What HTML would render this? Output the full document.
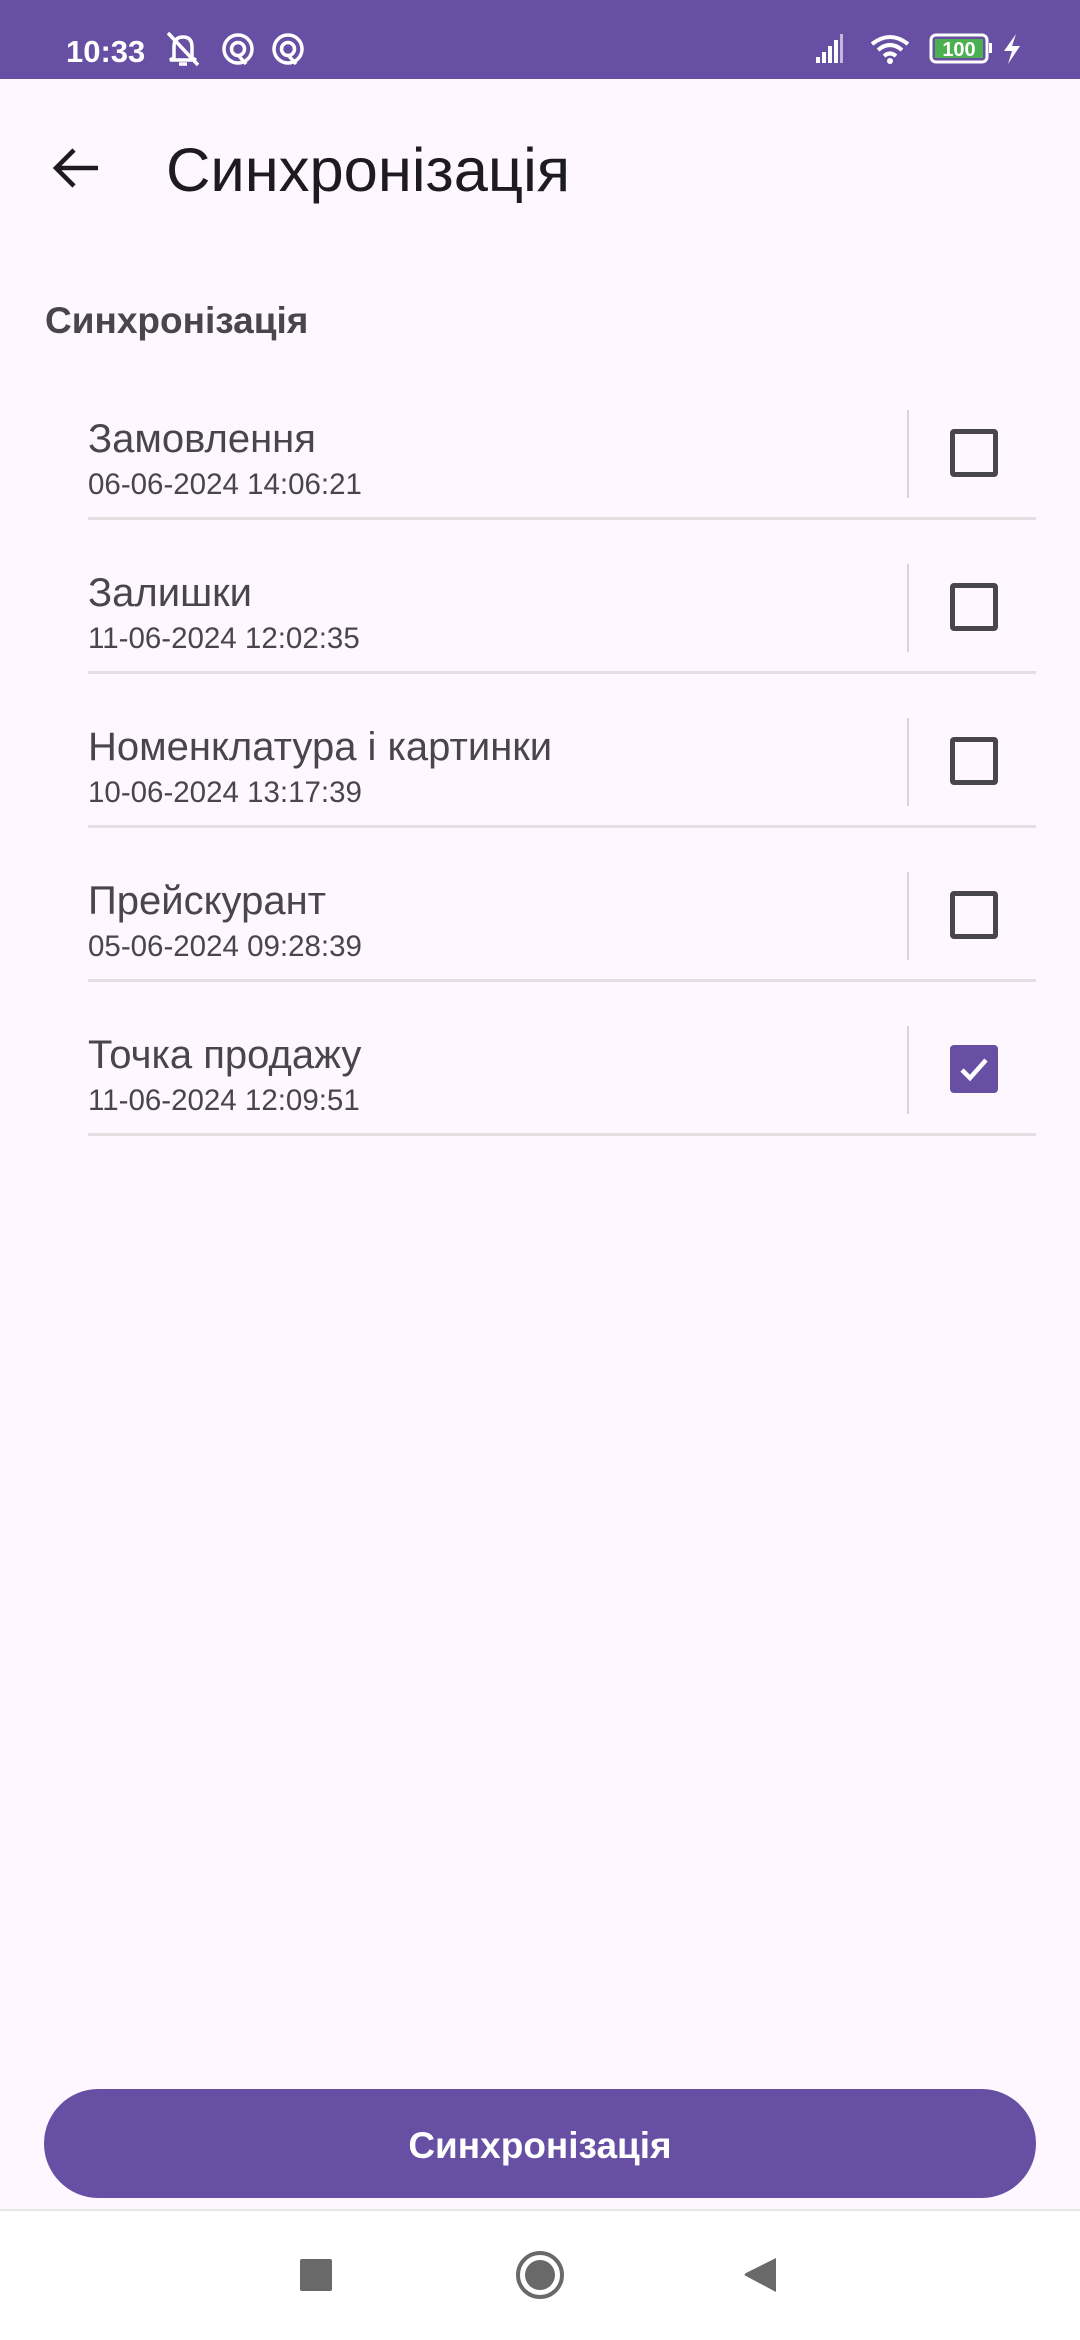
<!DOCTYPE html>
<html><head><meta charset="utf-8"><style>
*{margin:0;padding:0;box-sizing:border-box}
body{width:1080px;height:2340px;background:#FEF7FF;font-family:"Liberation Sans",sans-serif;position:relative;overflow:hidden}
.a{position:absolute;line-height:1;white-space:nowrap}
.sb{position:absolute;left:0;top:0;width:1080px;height:79px;background:#6750A4}
.t{font-size:40px;color:#49454F;left:88px}
.d{font-size:29.5px;color:#49454F;left:88px}
.div{position:absolute;left:88px;width:948px;height:3px;background:#E2DEE2}
.vd{position:absolute;left:907px;width:2px;height:88px;background:#D8D4D8}
.cb{position:absolute;left:950px;width:48px;height:48px;border:5px solid #49454F;border-radius:4px}
</style></head><body>
<div class="sb"></div>
<div class="a" style="left:66px;top:36px;font-size:31px;font-weight:bold;color:#fff">10:33</div>
<svg class="a" style="left:166px;top:30px" width="140" height="40" viewBox="0 0 140 40">
<g fill="none" stroke="#fff" stroke-width="3.5">
<path d="M8 28 L8 17 Q8 7 17 7 Q26 7 26 17 L26 28 L30 30 L4 30 Z"/><path d="M13 34 H21"/><path d="M2 3 L32 35"/>
<circle cx="72" cy="19" r="14"/><circle cx="72" cy="19" r="6.5"/><path d="M72 25 L80 34"/>
<circle cx="122" cy="19" r="14"/><circle cx="122" cy="19" r="6.5"/><path d="M122 25 L130 34"/>
</g></svg>
<svg class="a" style="left:814px;top:32px" width="210" height="34" viewBox="0 0 210 34">
<g fill="#fff"><rect x="2" y="25" width="4" height="6"/><rect x="8" y="20" width="4" height="11"/><rect x="14" y="14" width="4" height="17"/><rect x="20" y="8" width="4" height="23"/><rect x="26" y="2" width="3" height="29" opacity=".6"/></g>
<g fill="none" stroke="#fff" stroke-width="4"><path d="M58 12 Q76 -2 94 12"/><path d="M64 18 Q76 8 88 18"/><path d="M70 24 Q76 19 82 24"/></g>
<circle cx="76" cy="29" r="3" fill="#fff"/>
<rect x="117" y="3" width="56" height="27" rx="5" fill="none" stroke="#fff" stroke-width="3"/>
<rect x="121" y="7" width="48" height="19" fill="#4CAF50"/><rect x="175" y="11" width="3" height="10" fill="#fff"/>
<text x="145" y="24" font-family="Liberation Sans" font-size="20" font-weight="bold" fill="#fff" text-anchor="middle">100</text>
<path d="M202 2 L190 19 L198 19 L194 32 L206 14 L198 14 Z" fill="#fff"/>
</svg>
<svg class="a" style="left:52px;top:146px" width="50" height="44" viewBox="0 0 50 44"><path d="M46 22 H6 M22 4 L4 22 L22 40" fill="none" stroke="#1D1B20" stroke-width="4.5"/></svg>
<div class="a" style="left:166px;top:140px;font-size:61.5px;color:#1D1B20">Синхронізація</div>
<div class="a" style="left:45px;top:302px;font-size:37px;font-weight:bold;color:#49454F">Синхронізація</div>

<div class="a t" style="top:419px">Замовлення</div>
<div class="a d" style="top:470px">06-06-2024 14:06:21</div>
<div class="vd" style="top:410px"></div><div class="cb" style="top:429px"></div>
<div class="div" style="top:517px"></div>

<div class="a t" style="top:573px">Залишки</div>
<div class="a d" style="top:624px">11-06-2024 12:02:35</div>
<div class="vd" style="top:564px"></div><div class="cb" style="top:583px"></div>
<div class="div" style="top:671px"></div>

<div class="a t" style="top:727px">Номенклатура і картинки</div>
<div class="a d" style="top:778px">10-06-2024 13:17:39</div>
<div class="vd" style="top:718px"></div><div class="cb" style="top:737px"></div>
<div class="div" style="top:825px"></div>

<div class="a t" style="top:881px">Прейскурант</div>
<div class="a d" style="top:932px">05-06-2024 09:28:39</div>
<div class="vd" style="top:872px"></div><div class="cb" style="top:891px"></div>
<div class="div" style="top:979px"></div>

<div class="a t" style="top:1035px">Точка продажу</div>
<div class="a d" style="top:1086px">11-06-2024 12:09:51</div>
<div class="vd" style="top:1026px"></div>
<div class="cb" style="top:1045px;background:#6750A4;border:none">
<svg width="48" height="48" viewBox="0 0 48 48"><path d="M12 25 L20 33 L36 15" fill="none" stroke="#fff" stroke-width="4.5"/></svg></div>
<div class="div" style="top:1133px"></div>

<div style="position:absolute;left:44px;top:2089px;width:992px;height:109px;border-radius:55px;background:#6750A4"></div>
<div class="a" style="left:0;width:1080px;text-align:center;top:2127px;font-size:37px;font-weight:bold;color:#fff">Синхронізація</div>

<div style="position:absolute;left:0;top:2209px;width:1080px;height:131px;background:#fff;border-top:2px solid #E6E6E6"></div>
<div style="position:absolute;left:300px;top:2259px;width:32px;height:32px;border-radius:2px;background:#696969"></div>
<div style="position:absolute;left:516px;top:2251px;width:48px;height:48px;border-radius:50%;border:4px solid #696969;background:#fff"></div>
<div style="position:absolute;left:525px;top:2260px;width:30px;height:30px;border-radius:50%;background:#696969"></div>
<svg class="a" style="left:742px;top:2256px" width="36" height="38" viewBox="0 0 36 38"><path d="M34 2 L34 36 L4 20 Q1 19 4 17 Z" fill="#696969"/></svg>
</body></html>
